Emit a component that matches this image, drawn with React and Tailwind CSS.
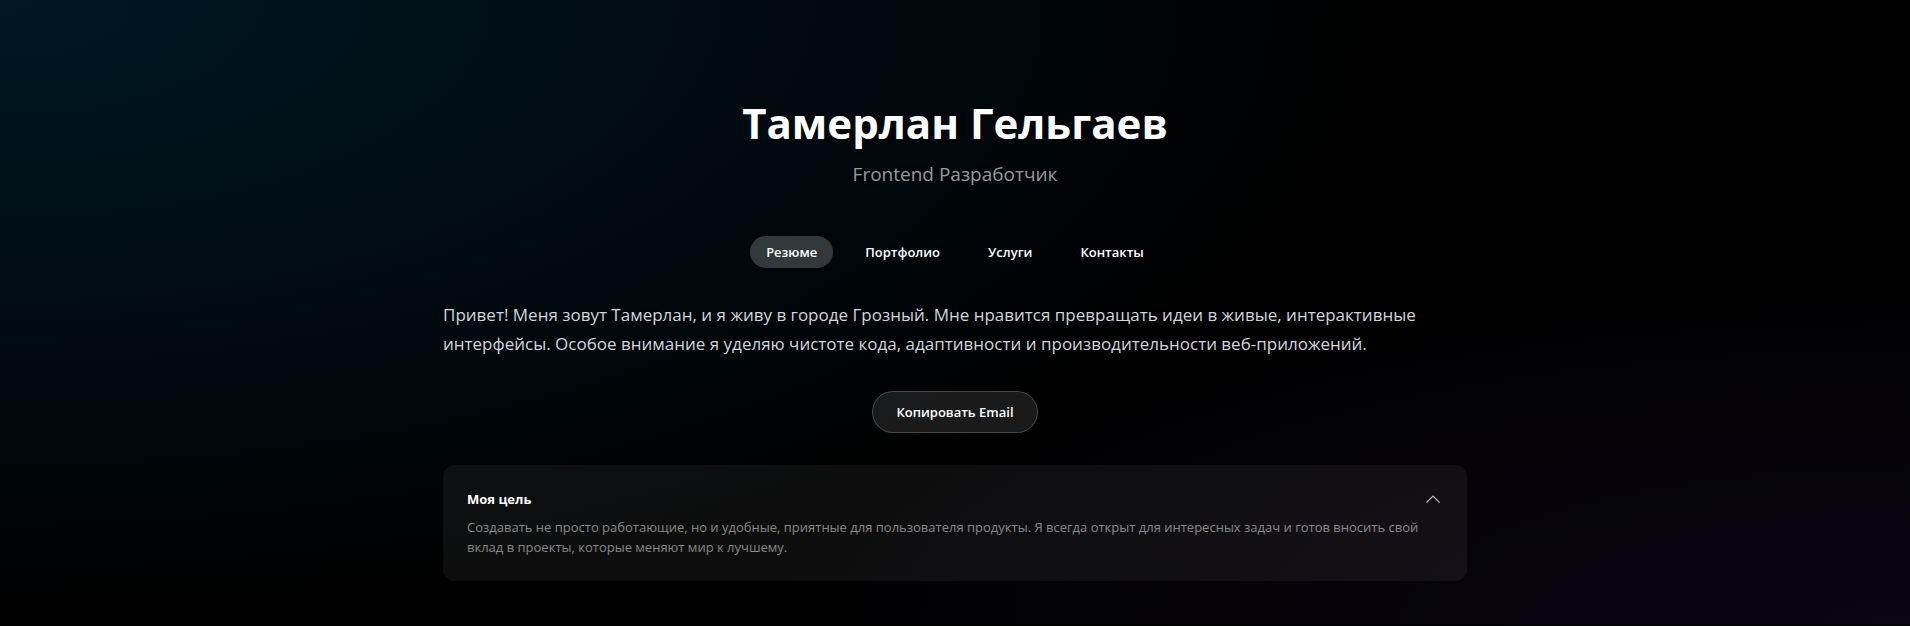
import { useState } from "react";

const tabs = ["Резюме", "Портфолио", "Услуги", "Контакты"];

export default function App() {
  const [active, setActive] = useState("Резюме");
  const [open, setOpen] = useState(true);

  return (
    <div className="min-h-screen bg-black font-['Open_Sans','Noto_Sans',sans-serif] text-white">
      <div className="min-h-[624px] bg-[radial-gradient(72%_98%_at_top_left,#001824,transparent),radial-gradient(62%_58%_at_bottom_right,#0a0612,transparent)] px-4 pt-[98px] pb-11">
        <div className="mx-auto flex max-w-5xl flex-col">
          <header className="text-center">
            <h1 className="text-[42px] leading-[50px] font-bold">Тамерлан Гельгаев</h1>
            <p className="mt-3 text-[19px] leading-7 text-white/60">Frontend Разработчик</p>
          </header>
          <nav aria-label="Разделы" className="mt-12 flex justify-center gap-4">
            {tabs.map((tab) => (
              <button
                key={tab}
                type="button"
                onClick={() => setActive(tab)}
                className={
                  "rounded-full px-4 py-1.5 text-[13px] leading-5 font-semibold " +
                  (tab === active ? "bg-white/20" : "bg-transparent")
                }
              >
                {tab}
              </button>
            ))}
          </nav>
          <p className="mt-8 text-[17px] leading-[29px] text-gray-300">
            Привет! Меня зовут Тамерлан, и я живу в городе Грозный. Мне нравится превращать идеи в
            живые, интерактивные интерфейсы. Особое внимание я уделяю чистоте кода, адаптивности и
            производительности веб-приложений.
          </p>
          <button
            type="button"
            className="mt-[33px] self-center rounded-full border border-white/20 bg-white/10 px-[23px] py-2.5 text-[13px] leading-5 font-semibold"
          >
            Копировать Email
          </button>
          <section className="mt-8 rounded-xl bg-white/5 p-6">
            <button
              type="button"
              aria-expanded={open}
              onClick={() => setOpen(!open)}
              className="flex w-full items-center justify-between text-[13px] leading-5 font-bold"
            >
              Моя цель
              <svg viewBox="0 0 20 20" className="size-5 text-white/70" fill="none" stroke="currentColor" strokeWidth="1.2" aria-hidden="true">
                <path d="M3.5 13.5 10 7l6.5 6.5" />
              </svg>
            </button>
            {open && (
              <p className="mt-2 text-[13px] leading-5 text-white/50">
                Создавать не просто работающие, но и удобные, приятные для пользователя продукты. Я
                всегда открыт для интересных задач и готов вносить свой вклад в проекты, которые
                меняют мир к лучшему.
              </p>
            )}
          </section>
        </div>
      </div>
    </div>
  );
}
